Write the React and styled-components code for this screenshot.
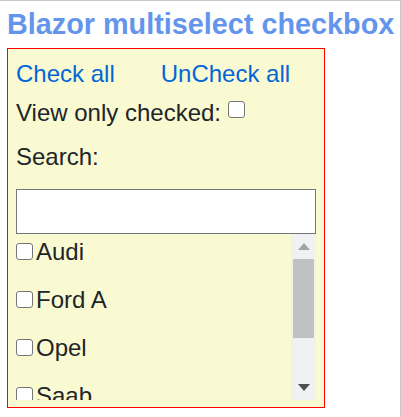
import React from 'react';
import styled, { createGlobalStyle } from 'styled-components';

const Global = createGlobalStyle`
  html, body { margin: 0; padding: 0; background: #fff; }
  body { font-family: "Liberation Sans", Arial, sans-serif; color: #212529; }
`;

const Page = styled.div`
  box-sizing: border-box;
  width: 401px;
  min-height: 417px;
  border-top: 1px solid #c8c8c8;
  border-right: 1px solid #c8c8c8;
  padding: 0 0 0 7px;
`;

const Title = styled.h3`
  margin: 7px 0;
  font-size: 28.8px;
  line-height: 33px;
  font-weight: 700;
  color: #6495ed;
  white-space: nowrap;
`;

const Panel = styled.div`
  box-sizing: border-box;
  width: 318px;
  border: 1px solid #ff0000;
  background: #fafad2;
  padding: 11px 8px 7px;
  font-size: 24px;
  line-height: 28px;
  display: flex;
  flex-direction: column;
`;

const LinkRow = styled.div`
  display: flex;
  height: 28px;
`;

const Link = styled.a`
  color: #0366d6;
  text-decoration: none;
  cursor: pointer;
  & + & { margin-left: 46px; }
`;

const Line = styled.div`
  margin-top: ${p => p.$gap}px;
  height: 28px;
  white-space: nowrap;
`;

const Check = styled.input.attrs({ type: 'checkbox' })`
  appearance: none;
  -webkit-appearance: none;
  box-sizing: border-box;
  width: 17px;
  height: 17px;
  margin: ${p => (p.$inline ? '0 0 3px 0' : '0 3px 0 0')};
  border: 1px solid #767676;
  border-radius: 3px;
  background: #fff;
  vertical-align: baseline;
  &:checked { background: #0075ff; border-color: #0075ff; }
`;

const SearchInput = styled.input`
  box-sizing: border-box;
  margin-top: 18px;
  width: 300px;
  height: 45px;
  border: 1px solid #767676;
  background: #fff;
  padding: 0 4px;
  font: inherit;
  outline: none;
`;

const List = styled.div`
  display: flex;
  height: 166px;
`;

const Items = styled.div`
  flex: 1;
  overflow: hidden;
  padding-top: 4px;
`;

const Item = styled.label`
  display: block;
  height: 28px;
  margin-bottom: 20px;
  white-space: nowrap;
`;

const ScrollBar = styled.div`
  width: 25px;
  flex-shrink: 0;
  background: #f1f1f1;
  display: flex;
  flex-direction: column;
`;

const ScrollButton = styled.div`
  height: 25px;
  display: flex;
  align-items: center;
  justify-content: center;
  flex-shrink: 0;
`;

const Thumb = styled.div`
  margin: 0 2px;
  height: 79px;
  background: #c1c1c1;
`;

const Track = styled.div`
  flex: 1;
`;

const Arrow = ({ up, color }) => (
  <svg width="12" height="7" viewBox="0 0 12 7">
    <polygon points={up ? '0,7 6,0 12,7' : '0,0 12,0 6,7'} fill={color} />
  </svg>
);

const cars = ['Audi', 'Ford A', 'Opel', 'Saab'];

export default function App() {
  return (
    <>
      <Global />
      <Page>
        <Title>Blazor multiselect checkbox</Title>
        <Panel>
          <LinkRow>
            <Link>Check all</Link>
            <Link>UnCheck all</Link>
          </LinkRow>
          <Line $gap={11}>
            View only checked: <Check $inline />
          </Line>
          <Line $gap={16}>Search:</Line>
          <SearchInput type="text" />
          <List>
            <Items>
              {cars.map(c => (
                <Item key={c}>
                  <Check />
                  {c}
                </Item>
              ))}
            </Items>
            <ScrollBar>
              <ScrollButton><Arrow up color="#a3a3a3" /></ScrollButton>
              <Thumb />
              <Track />
              <ScrollButton><Arrow color="#505050" /></ScrollButton>
            </ScrollBar>
          </List>
        </Panel>
      </Page>
    </>
  );
}
